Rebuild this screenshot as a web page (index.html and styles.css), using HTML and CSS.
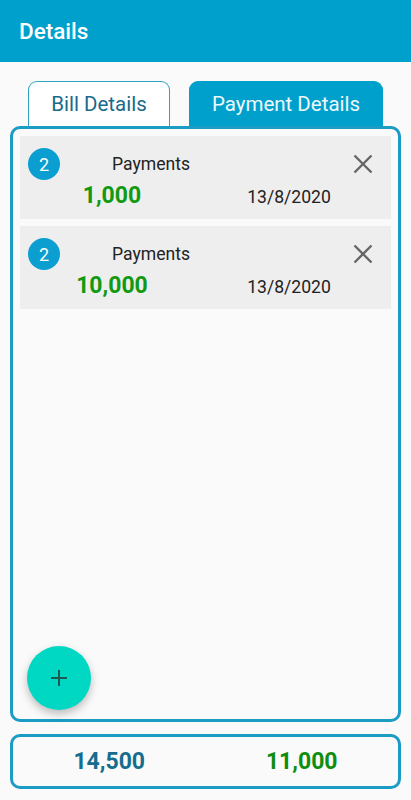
FILE: index.html
```html
<!DOCTYPE html>
<html lang="en">
<head>
<meta charset="UTF-8">
<meta name="viewport" content="width=device-width, initial-scale=1.0">
<title>Details</title>
<link rel="stylesheet" href="styles.css">
</head>
<body>

<div class="appbar">
    <h1>Details</h1>
</div>

<div class="tabs">
    <div class="tab">Bill Details</div>
    <div class="tab active">Payment Details</div>
</div>

<div class="panel">
    <!-- payment entries -->
    <div class="card">
        <div class="card-top">
            <span class="badge">2</span>
            <span class="label">Payments</span>
            <svg class="remove" width="20" height="20" viewBox="0 0 20 20">
                <path d="M1.5 1.5 L18.5 18.5 M18.5 1.5 L1.5 18.5" stroke="#666" stroke-width="2.4" fill="none"/>
            </svg>
        </div>
        <div class="card-bottom">
            <span class="amount">1,000</span>
            <span class="date">13/8/2020</span>
        </div>
    </div>
    <div class="card">
        <div class="card-top">
            <span class="badge">2</span>
            <span class="label">Payments</span>
            <svg class="remove" width="20" height="20" viewBox="0 0 20 20">
                <path d="M1.5 1.5 L18.5 18.5 M18.5 1.5 L1.5 18.5" stroke="#666" stroke-width="2.4" fill="none"/>
            </svg>
        </div>
        <div class="card-bottom">
            <span class="amount">10,000</span>
            <span class="date">13/8/2020</span>
        </div>
    </div>

    <button class="fab">
        <svg width="18" height="18" viewBox="0 0 18 18">
            <path d="M9 1 V17 M1 9 H17" stroke="#1d5b52" stroke-width="2" fill="none"/>
        </svg>
    </button>
</div>

<div class="totals">
    <span class="total-bill">14,500</span>
    <span class="total-paid">11,000</span>
</div>

</body>
</html>
```

FILE: styles.css
```css
body {
    margin: 0;
    background-color: #fafafa;
    font-family: Roboto, "Noto Sans", sans-serif;
}
.appbar {
    height: 62px;
    background-color: #00a0cd;
    display: flex;
    align-items: center;
    padding-left: 19px;
}
.appbar h1 {
    margin: 0;
    color: #fff;
    font-size: 22.5px;
    font-weight: 500;
}
.tabs {
    display: flex;
    margin-top: 19px;
    padding-left: 28px;
    gap: 19px;
}
.tab {
    box-sizing: border-box;
    height: 45px;
    width: 142px;
    border: 1px solid #2ea3bf;
    border-bottom: none;
    border-radius: 9px 9px 0 0;
    background-color: #fff;
    color: #19698a;
    font-size: 20.5px;
    display: flex;
    align-items: center;
    justify-content: center;
}
.tab.active {
    width: 194px;
    background-color: #00a0cd;
    border-color: #00a0cd;
    color: #eef8fb;
}
.panel {
    position: relative;
    box-sizing: border-box;
    height: 596px;
    margin: 0 10px;
    border: 3px solid #1a9cc4;
    border-radius: 10px;
    padding: 7px;
    display: flex;
    flex-direction: column;
    gap: 7px;
}
.card {
    box-sizing: border-box;
    height: 83px;
    background-color: #eeeeee;
    padding: 12px 0 0 8px;
}
.card-top {
    display: flex;
    align-items: center;
    height: 32px;
}
.badge {
    width: 32px;
    height: 32px;
    border-radius: 50%;
    background-color: #0a9fd0;
    color: #fff;
    font-size: 18px;
    display: flex;
    align-items: center;
    justify-content: center;
}
.label {
    margin-left: 52px;
    font-size: 17.6px;
    color: #222;
}
.remove {
    margin-left: auto;
    margin-right: 18px;
}
.card-bottom {
    display: grid;
    grid-template-columns: 168px 186px;
    align-items: baseline;
    margin-top: 4px;
    line-height: 24px;
}
.amount {
    text-align: center;
    font-size: 23px;
    font-weight: bold;
    color: #119a11;
}
.date {
    text-align: center;
    font-size: 17.6px;
    color: #222;
}
.fab {
    position: absolute;
    left: 14px;
    bottom: 9px;
    width: 64px;
    height: 64px;
    border: none;
    border-radius: 50%;
    background-color: #00d8c4;
    box-shadow: 0 4px 8px rgba(0, 0, 0, 0.25);
    display: flex;
    align-items: center;
    justify-content: center;
    padding: 0;
}
.totals {
    box-sizing: border-box;
    height: 55px;
    margin: 12px 10px 0;
    border: 3px solid #1a9cc4;
    border-radius: 10px;
    display: grid;
    grid-template-columns: 1fr 1fr;
    align-items: center;
    text-align: center;
    font-size: 23px;
    font-weight: bold;
}
.total-bill {
    color: #166d8d;
}
.total-paid {
    color: #0e8d0e;
}
```
